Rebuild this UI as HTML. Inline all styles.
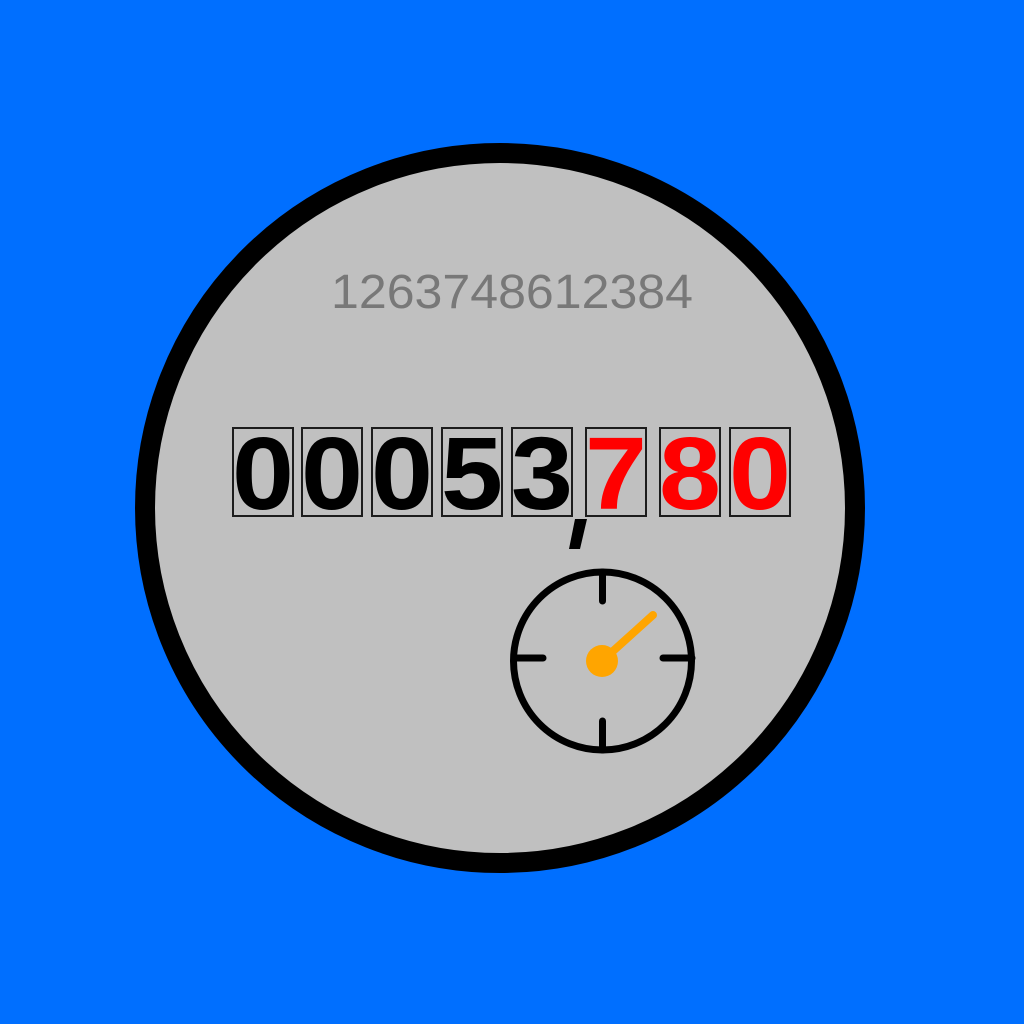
<!DOCTYPE html>
<html><head><meta charset="utf-8"><style>
html,body{margin:0;padding:0;background:#006FFF;}
svg{display:block;}
</style></head><body>
<svg width="1024" height="1024" viewBox="0 0 1024 1024" xmlns="http://www.w3.org/2000/svg">
<rect width="1024" height="1024" fill="#006FFF"/>
<circle cx="500" cy="508" r="355" fill="#C0C0C0" stroke="#000" stroke-width="20"/>
<text x="512" y="308" font-family="Liberation Sans, sans-serif" font-size="48" fill="#787878" text-anchor="middle" textLength="362" lengthAdjust="spacingAndGlyphs">1263748612384</text>
<g fill="none" stroke="#000" stroke-width="2" opacity="0.85">
<rect x="233" y="428" width="60" height="88"/>
<rect x="302" y="428" width="60" height="88"/>
<rect x="372" y="428" width="60" height="88"/>
<rect x="442" y="428" width="60" height="88"/>
<rect x="512" y="428" width="60" height="88"/>
<rect x="586" y="428" width="60" height="88"/>
<rect x="660" y="428" width="60" height="88"/>
<rect x="730" y="428" width="60" height="88"/>
</g>
<g font-family="Liberation Sans, sans-serif" font-weight="bold" font-size="103" text-anchor="middle" lengthAdjust="spacingAndGlyphs">
<text x="263" y="509" fill="#000" textLength="62" lengthAdjust="spacingAndGlyphs">0</text>
<text x="332" y="509" fill="#000" textLength="62" lengthAdjust="spacingAndGlyphs">0</text>
<text x="402" y="509" fill="#000" textLength="62" lengthAdjust="spacingAndGlyphs">0</text>
<text x="472" y="509" fill="#000" textLength="62" lengthAdjust="spacingAndGlyphs">5</text>
<text x="542" y="509" fill="#000" textLength="62" lengthAdjust="spacingAndGlyphs">3</text>
<text x="616" y="509" fill="#F00" textLength="62" lengthAdjust="spacingAndGlyphs">7</text>
<text x="690" y="509" fill="#F00" textLength="62" lengthAdjust="spacingAndGlyphs">8</text>
<text x="760" y="509" fill="#F00" textLength="62" lengthAdjust="spacingAndGlyphs">0</text>
</g>
<polygon points="575,519 587,519 580,549 569,549" fill="#000"/>
<circle cx="602.5" cy="661" r="89" fill="none" stroke="#000" stroke-width="7"/>
<g stroke="#000" stroke-width="7" stroke-linecap="round">
<line x1="602.5" y1="572" x2="602.5" y2="601"/>
<line x1="602.5" y1="721" x2="602.5" y2="750"/>
<line x1="514" y1="658" x2="543" y2="658"/>
<line x1="663" y1="658" x2="692" y2="658"/>
</g>
<line x1="602" y1="661" x2="653" y2="615" stroke="#FFA500" stroke-width="8" stroke-linecap="round"/>
<circle cx="602" cy="661" r="16" fill="#FFA500"/>
</svg>
</body></html>
